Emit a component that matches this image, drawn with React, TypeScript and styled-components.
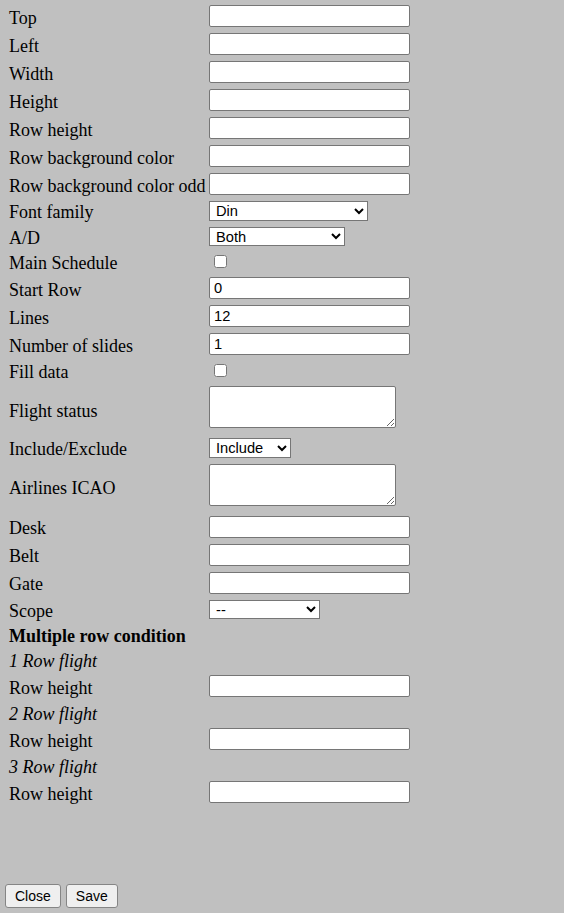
import React from 'react';
import styled, { createGlobalStyle, css } from 'styled-components';

const GlobalStyle = createGlobalStyle`
  html, body {
    margin: 0;
    padding: 0;
    background: #c0c0c0;
  }
`;

type Field =
  | { kind: 'text'; label: string; value?: string }
  | { kind: 'select'; label: string; value: string; width: number; options: string[] }
  | { kind: 'check'; label: string }
  | { kind: 'area'; label: string }
  | { kind: 'heading'; label: string }
  | { kind: 'sub'; label: string };

const fields: Field[] = [
  { kind: 'text', label: 'Top' },
  { kind: 'text', label: 'Left' },
  { kind: 'text', label: 'Width' },
  { kind: 'text', label: 'Height' },
  { kind: 'text', label: 'Row height' },
  { kind: 'text', label: 'Row background color' },
  { kind: 'text', label: 'Row background color odd' },
  { kind: 'select', label: 'Font family', value: 'Din', width: 159, options: ['Din', 'Arial', 'Helvetica'] },
  { kind: 'select', label: 'A/D', value: 'Both', width: 136, options: ['Both', 'Arrivals', 'Departures'] },
  { kind: 'check', label: 'Main Schedule' },
  { kind: 'text', label: 'Start Row', value: '0' },
  { kind: 'text', label: 'Lines', value: '12' },
  { kind: 'text', label: 'Number of slides', value: '1' },
  { kind: 'check', label: 'Fill data' },
  { kind: 'area', label: 'Flight status' },
  { kind: 'select', label: 'Include/Exclude', value: 'Include', width: 82, options: ['Include', 'Exclude'] },
  { kind: 'area', label: 'Airlines ICAO' },
  { kind: 'text', label: 'Desk' },
  { kind: 'text', label: 'Belt' },
  { kind: 'text', label: 'Gate' },
  { kind: 'select', label: 'Scope', value: '--', width: 111, options: ['--'] },
  { kind: 'heading', label: 'Multiple row condition' },
  { kind: 'sub', label: '1 Row flight' },
  { kind: 'text', label: 'Row height' },
  { kind: 'sub', label: '2 Row flight' },
  { kind: 'text', label: 'Row height' },
  { kind: 'sub', label: '3 Row flight' },
  { kind: 'text', label: 'Row height' },
];

const App = (): JSX.Element => {
  return (
    <Page>
      <GlobalStyle />
      <Form>
        {fields.map((f, i) => {
          if (f.kind === 'heading') return <Heading key={i}>{f.label}</Heading>;
          if (f.kind === 'sub') return <SubHeading key={i}>{f.label}</SubHeading>;
          return (
            <React.Fragment key={i}>
              <Label>{f.label}</Label>
              <Cell>
                {f.kind === 'text' && <TextInput type="text" defaultValue={f.value ?? ''} />}
                {f.kind === 'select' && (
                  <Select $width={f.width} defaultValue={f.value}>
                    {f.options.map((o) => (
                      <option key={o}>{o}</option>
                    ))}
                  </Select>
                )}
                {f.kind === 'check' && <Check type="checkbox" />}
                {f.kind === 'area' && <Area />}
              </Cell>
            </React.Fragment>
          );
        })}
      </Form>
      <Buttons>
        <Button type="button">Close</Button>
        <Button type="button">Save</Button>
      </Buttons>
    </Page>
  );
};

export default App;

// the serif text sits a little lower in its row than the line box centre
const textLine = css`
  line-height: 19px;
  padding-top: 2px;
  margin-bottom: -2px;
  white-space: nowrap;
`;

const Page = styled.div`
  min-height: 100vh;
  box-sizing: border-box;
  display: flex;
  flex-direction: column;
  padding: 5px 0 5px 5px;
  font-family: 'Liberation Serif', 'Times New Roman', serif;
  font-size: 18px;
  color: #000;
`;

const Form = styled.div`
  display: grid;
  grid-template-columns: 200px auto;
  row-gap: 6px;
  align-items: center;
  padding-left: 4px;
`;

const Label = styled.div`
  ${textLine}
`;

const Cell = styled.div`
  display: flex;
  align-items: center;
  min-height: 19px;
`;

const Heading = styled.div`
  ${textLine}
  grid-column: 1 / -1;
  font-weight: bold;
`;

const SubHeading = styled.div`
  ${textLine}
  grid-column: 1 / -1;
  font-style: italic;
`;

const TextInput = styled.input`
  box-sizing: border-box;
  width: 201px;
  height: 22px;
  margin: 0;
  padding: 0 4px;
  border: 1px solid #767676;
  border-radius: 2px;
  background: #fff;
  font-family: 'Liberation Sans', Arial, sans-serif;
  font-size: 14.67px;
  color: #000;
`;

const Select = styled.select<{ $width: number }>`
  box-sizing: border-box;
  width: ${(p) => p.$width}px;
  height: 19.5px;
  margin: 0;
  padding: 0 0 0 2px;
  border: 1px solid #767676;
  border-radius: 0;
  background: #fff;
  font-family: 'Liberation Sans', Arial, sans-serif;
  font-size: 14.67px;
  color: #000;
`;

const Check = styled.input`
  width: 13px;
  height: 13px;
  margin: 0 0 0 5px;
`;

const Area = styled.textarea`
  box-sizing: border-box;
  width: 187px;
  height: 42px;
  margin: 0 0 4px 0;
  padding: 2px;
  border: 1px solid #767676;
  border-radius: 2px;
  background: #fff;
  font-family: 'Liberation Mono', monospace;
  font-size: 13.33px;
`;

const Buttons = styled.div`
  margin-top: auto;
  display: flex;
  gap: 5px;
`;

const Button = styled.button`
  box-sizing: border-box;
  height: 24px;
  margin: 0;
  padding: 0 9px;
  border: 1px solid #858585;
  border-radius: 3px;
  background: #efefef;
  font-family: 'Liberation Sans', Arial, sans-serif;
  font-size: 14px;
  color: #000;
`;
